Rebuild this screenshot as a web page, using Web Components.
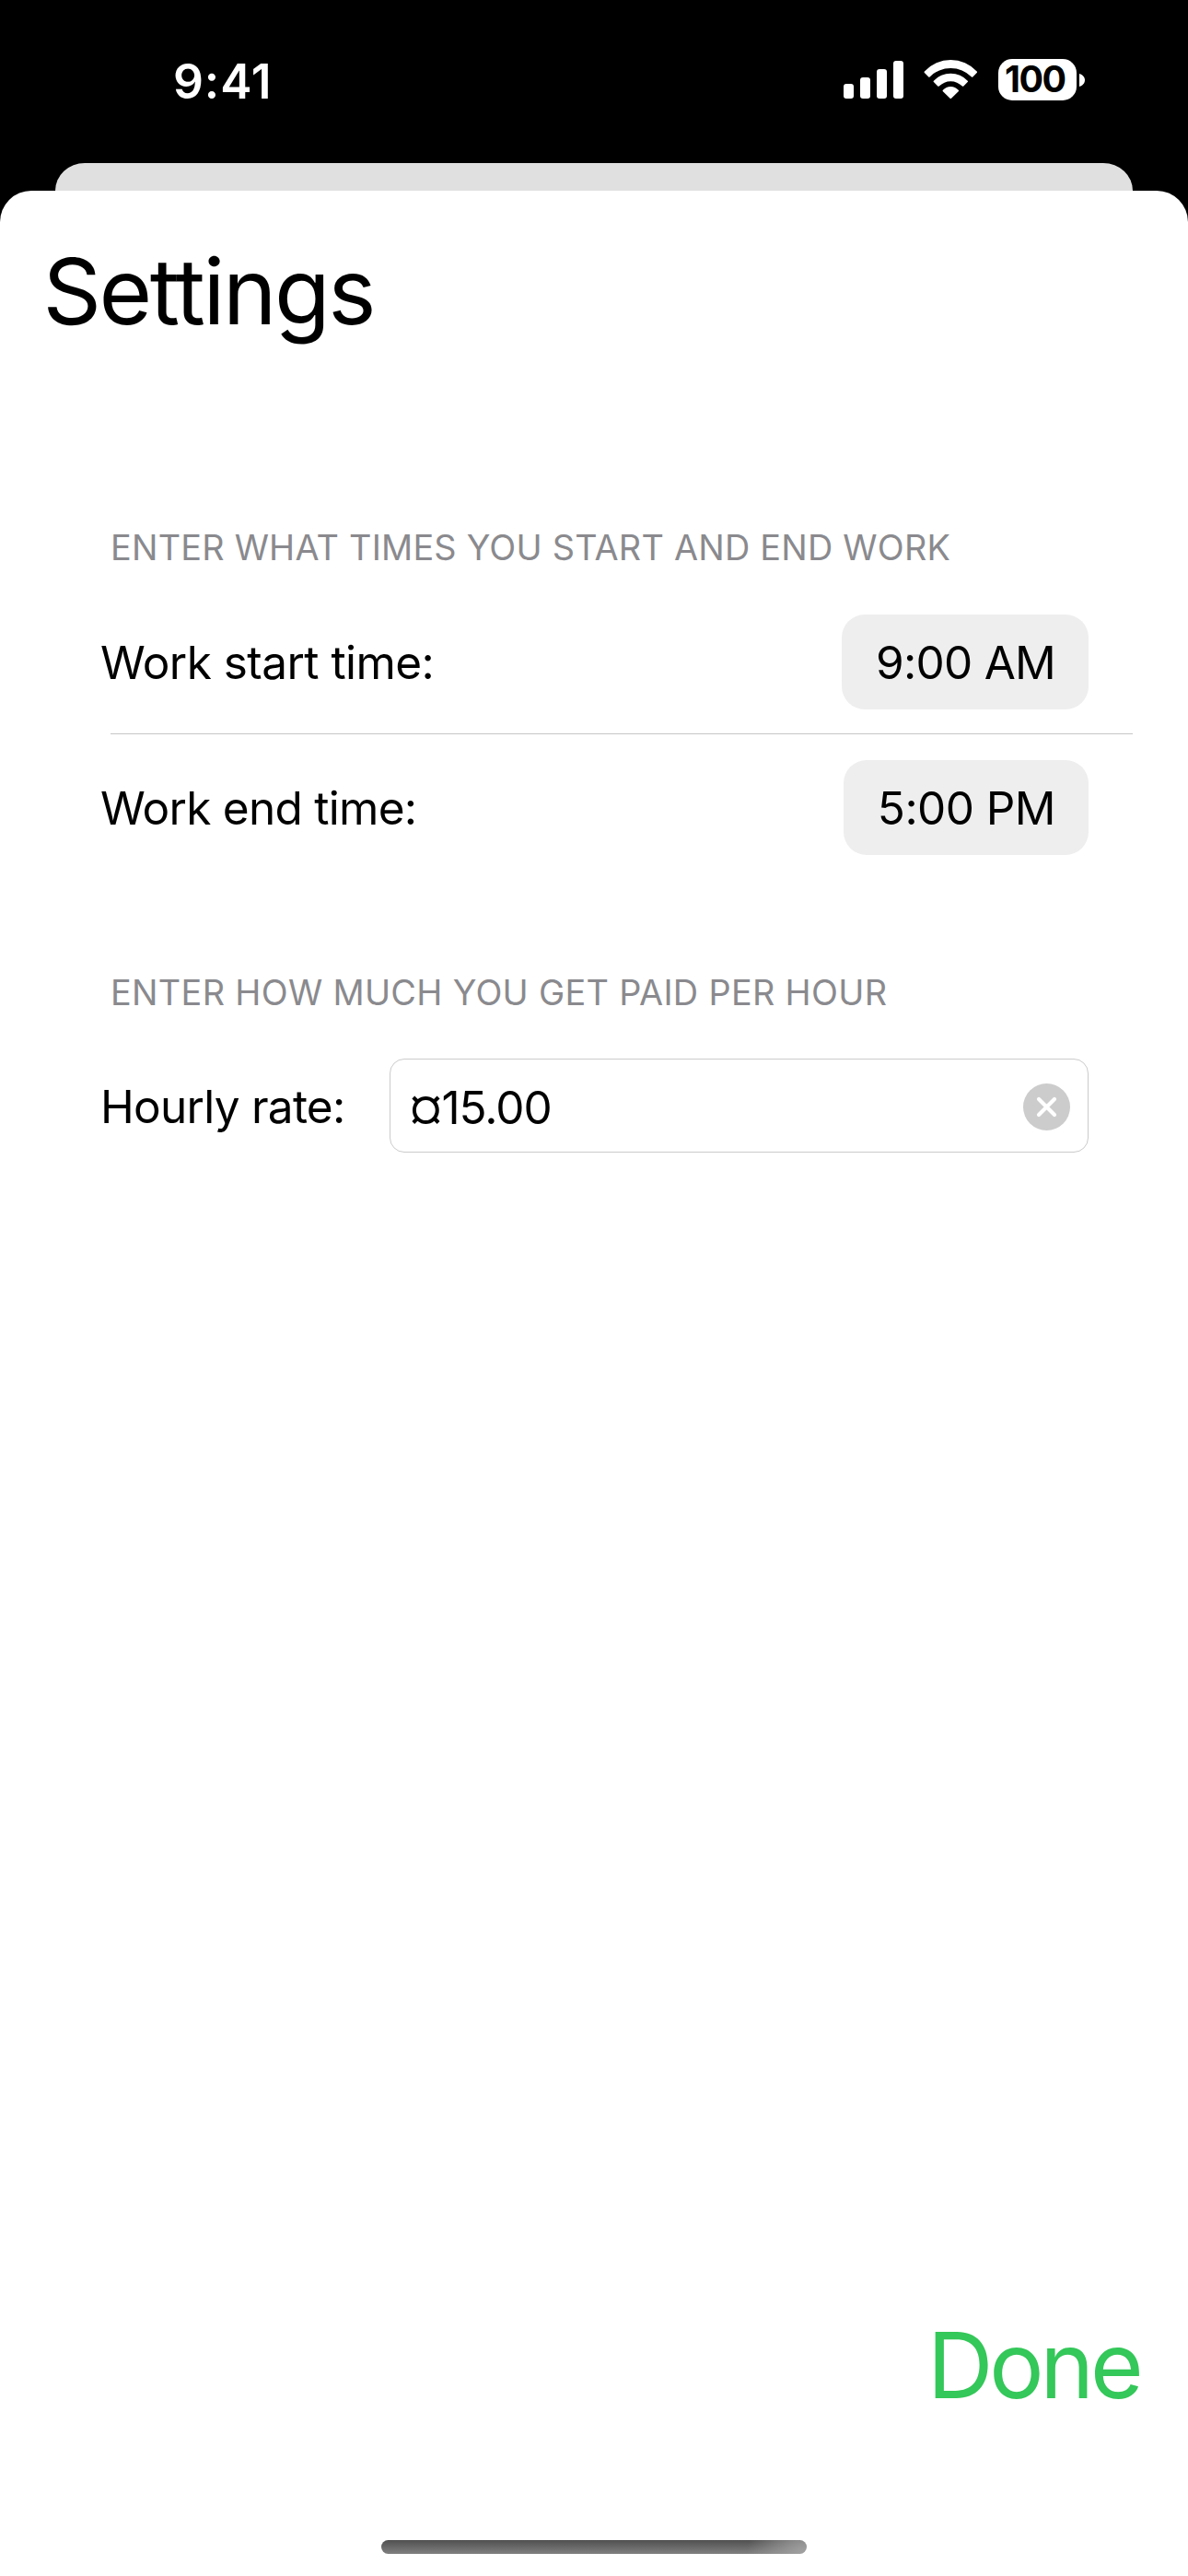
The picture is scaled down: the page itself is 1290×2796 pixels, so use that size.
<!DOCTYPE html>
<html lang="en">
<head>
<meta charset="utf-8">
<title>Settings</title>
<style>
  html, body { margin: 0; background: #000; }
</style>
</head>
<body>
<settings-screen></settings-screen>

<template id="settings-screen">
  <style>
    :host { display: flex; flex-direction: column; width: 1290px; height: 2796px; overflow: hidden; background: #000; font-family: Inter, "Liberation Sans", sans-serif; color: #000; white-space: nowrap; }
    .behind { height: 30px; margin: 0 60px; flex: none; background: #e0e0e0; overflow: hidden; border-radius: 32px 32px 0 0 / 30px 30px 0 0; }
  </style>
  <status-bar></status-bar>
  <div class="behind"></div>
  <modal-sheet>
    <span slot="title">Settings</span>
    <form-section style="--gap-top: 195px; --track: .23px">
      <span slot="header">ENTER WHAT TIMES YOU START AND END WORK</span>
      <form-row divider style="--top: 27px; --bottom: 26px; --track: -.54px">Work start time:<time-chip slot="control" style="--track: -.75px">9:00 AM</time-chip></form-row>
      <form-row style="--top: 28px; --bottom: 26px; --track: -.72px">Work end time:<time-chip slot="control" style="--track: -.56px">5:00 PM</time-chip></form-row>
    </form-section>
    <form-section style="--gap-top: 100px; --track: .33px">
      <span slot="header">ENTER HOW MUCH YOU GET PAID PER HOUR</span>
      <form-row style="--top: 26px; --bottom: 26px; --drop: 2px; --track: -.74px">Hourly rate:<text-input slot="control">¤15.00</text-input></form-row>
    </form-section>
    <span slot="action">Done</span>
  </modal-sheet>
</template>

<template id="status-bar">
  <style>
    :host { display: flex; flex: none; height: 177px; box-sizing: border-box; padding: 58px 112px 59px 188px; align-items: center; justify-content: space-between; color: #fff; }
    .time { font-size: 51.5px; font-weight: 600; line-height: 60px; letter-spacing: .9px; }
    .icons { display: flex; align-items: center; height: 45px; margin-bottom: 3px; }
    svg { display: block; fill: #fff; }
    .signal { margin-right: 22px; }
    .wifi { margin-right: 22px; }
    .battery { width: 85px; height: 45px; border-radius: 15px; box-sizing: border-box; padding-left: 7px; background: #fff; color: #000; font-size: 39.4px; font-weight: 700; line-height: 45px; letter-spacing: -1.5px; }
    .nub { margin-left: 3px; }
  </style>
  <span class="time">9:41</span>
  <div class="icons">
    <svg class="signal" width="65" height="41" viewBox="0 0 65 41"><rect y="25" width="11" height="16" rx="3"/><rect x="18" y="18" width="11" height="23" rx="3"/><rect x="36" y="9" width="11" height="32" rx="3"/><rect x="54" width="11" height="41" rx="3"/></svg>
    <svg class="wifi" width="59" height="45" viewBox="0 0 59 45"><path d="M.9 15.1Q.2 14.3.9 13.6A38.5 38.5 0 0 1 57.7 13.6Q58.4 14.3 57.7 15.1L53.3 19.4Q52.7 20 52 19.4A32 32 0 0 0 6.6 19.4Q5.9 20 5.3 19.4ZM10.9 25.1Q10.2 24.4 10.9 23.7A25.2 25.2 0 0 1 47.7 23.7Q48.4 24.4 47.7 25.1L43.3 29.5Q42.6 30.1 41.9 29.5A17.9 17.9 0 0 0 16.7 29.5Q16 30.1 15.3 29.5ZM20.9 35.2Q20.2 34.5 20.9 33.8A11.2 11.2 0 0 1 37.7 33.8Q38.4 34.5 37.7 35.2L30 42.8Q29.3 43.4 28.6 42.8Z"/></svg>
    <div class="battery">100</div>
    <svg class="nub" width="6" height="14" viewBox="0 0 6 14"><path d="M0 0C3.5 1 6 3.7 6 7S3.5 13 0 14Z"/></svg>
  </div>
</template>

<template id="modal-sheet">
  <style>
    :host { display: flex; flex: 1; flex-direction: column; box-sizing: border-box; padding-top: 49px; background: #fff; border-radius: 34px 34px 0 0; }
    h1 { margin: 0; padding-left: 46.4px; font-size: 99px; font-weight: 400; line-height: 120px; letter-spacing: -2.4px; }
    .done { display: block; margin: auto 52.4px 130px auto; padding: 0; border: 0; background: none; font: 400 99px/120px Inter, "Liberation Sans", sans-serif; letter-spacing: -4.1px; color: #34c759; }
    .home { flex: none; align-self: center; width: 462px; height: 15px; margin-bottom: 24px; border-radius: 7.5px; background: radial-gradient(circle at 100% 120%, #a4a4a4 0, #a4a4a400 65px), linear-gradient(#505050, #808080); }
  </style>
  <h1><slot name="title"></slot></h1>
  <slot></slot>
  <button class="done"><slot name="action"></slot></button>
  <div class="home"></div>
</template>

<template id="form-section">
  <style>
    :host { display: block; margin-top: var(--gap-top); }
    h2 { margin: 0 0 22px; padding-left: 120px; font-size: 37.8px; font-weight: 400; line-height: 47px; letter-spacing: var(--track); color: #8a8a8e; }
  </style>
  <h2><slot name="header"></slot></h2>
  <slot></slot>
</template>

<template id="form-row">
  <style>
    :host { display: block; }
    .line { display: flex; align-items: center; padding: var(--top) 108px var(--bottom) 109px; font-size: 49.5px; line-height: 60px; letter-spacing: var(--track); }
    .label { flex: 1; padding-top: var(--drop, 0); }
    .rule { display: none; height: 1px; margin: 0 60px 0 120px; background: #c6c6c8; }
    :host([divider]) .rule { display: block; }
  </style>
  <div class="line"><span class="label"><slot></slot></span><slot name="control"></slot></div>
  <div class="rule"></div>
</template>

<template id="time-chip">
  <style>
    :host { display: block; height: 103px; padding: 0 36px 0 37px; border-radius: 25px; background: #eeeeef; line-height: 105px; letter-spacing: var(--track); }
  </style>
  <slot></slot>
</template>

<template id="text-input">
  <style>
    :host { display: flex; align-items: center; justify-content: space-between; box-sizing: border-box; width: 759px; height: 102px; padding: 3px 19px 0 20.6px; border: 1px solid #cbcbcb; border-radius: 16px; letter-spacing: -1.04px; }
    svg { display: block; }
  </style>
  <span><slot></slot></span>
  <svg width="51" height="51" viewBox="0 0 51 51"><circle cx="25.5" cy="25.5" r="25.5" fill="#ccc"/><path d="M17 17L34 34M34 17L17 34" stroke="#fff" stroke-width="4.2" stroke-linecap="round"/></svg>
</template>

<script>
  for (const name of ['time-chip', 'text-input', 'form-row', 'form-section', 'modal-sheet', 'status-bar', 'settings-screen']) {
    customElements.define(name, class extends HTMLElement {
      constructor() {
        super();
        this.attachShadow({ mode: 'open' }).append(document.getElementById(name).content.cloneNode(true));
      }
    });
  }
</script>
</body>
</html>
